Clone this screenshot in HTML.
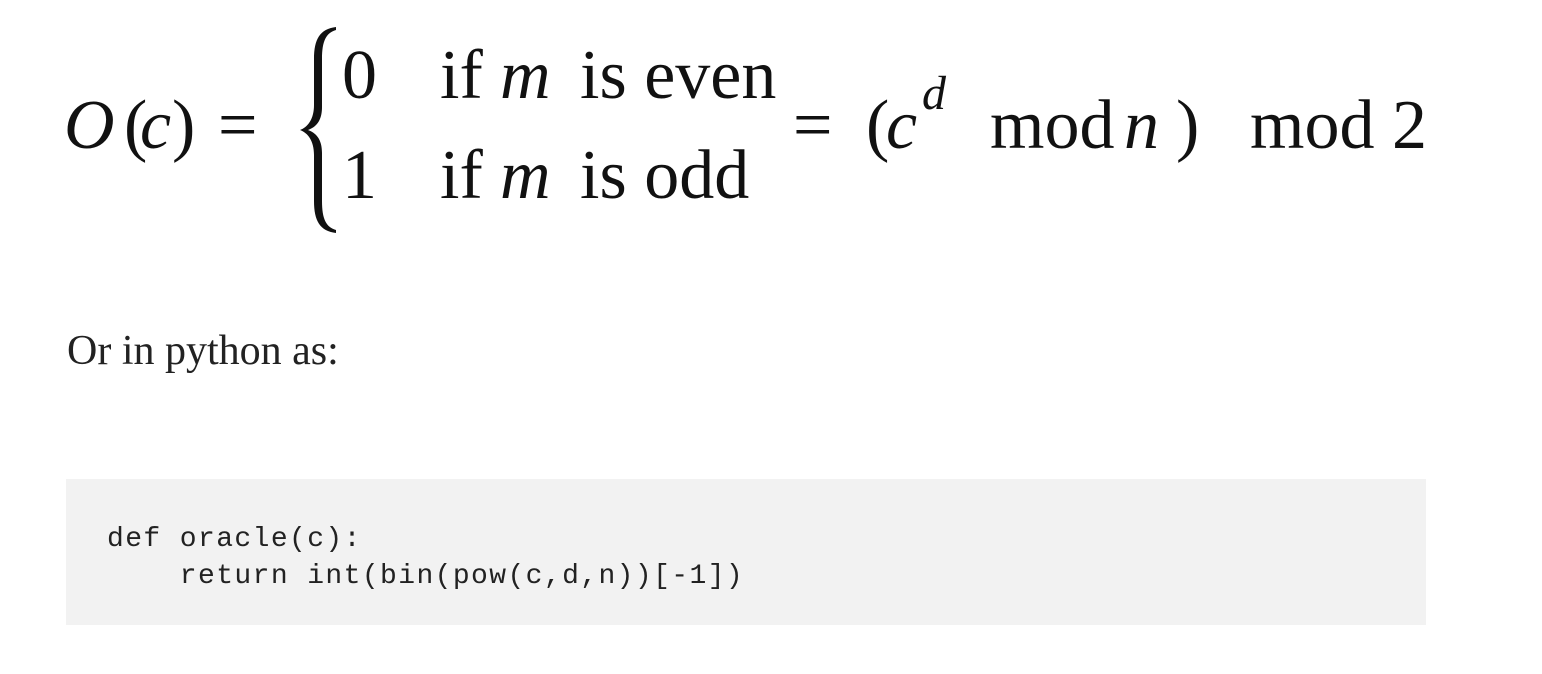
<!DOCTYPE html>
<html><head><meta charset="utf-8"><style>
html,body{margin:0;padding:0;background:#fff;}
body{width:1542px;height:674px;position:relative;overflow:hidden;color:#111;}
.m{position:absolute;font-family:"Liberation Serif",serif;font-size:70px;line-height:normal;white-space:pre;}
.i{font-style:italic;}
p{position:absolute;left:67px;top:327px;margin:0;font-family:"Liberation Serif",serif;font-size:42px;line-height:normal;color:#222;}
pre{position:absolute;left:66px;top:479px;width:1360px;height:146px;margin:0;background:#f2f2f2;box-sizing:border-box;padding:42px 0 0 41px;font-family:"Liberation Mono",monospace;font-size:28px;letter-spacing:1.4px;line-height:37px;color:#222;}
</style></head><body>
<span class="m i" style="left:64px;top:86px">O</span>
<span class="m" style="left:124px;top:86px">(</span>
<span class="m i" style="left:140px;top:86px">c</span>
<span class="m" style="left:172px;top:86px">)</span>
<span class="m" style="left:218px;top:86px">=</span>
<svg style="position:absolute;left:296px;top:25px" width="44" height="210" viewBox="0 0 44 210">
<path d="M40 2 C24 4 18 14 18 34 L18 80 C18 94 12 102 4 105 C12 108 18 116 18 130 L18 176 C18 196 24 206 40 208 L40 205 C30 202 26 194 26 176 L26 128 C26 114 20 108 12 105 C20 102 26 96 26 82 L26 34 C26 16 30 8 40 5 Z" fill="#111"/>
</svg>
<span class="m" style="left:342px;top:36px">0</span>
<span class="m" style="left:440px;top:36px">if</span>
<span class="m i" style="left:500px;top:36px">m</span>
<span class="m" style="left:580px;top:36px">is even</span>
<span class="m" style="left:342px;top:136px">1</span>
<span class="m" style="left:440px;top:136px">if</span>
<span class="m i" style="left:500px;top:136px">m</span>
<span class="m" style="left:580px;top:136px">is odd</span>
<span class="m" style="left:793px;top:86px">=</span>
<span class="m" style="left:866px;top:86px">(</span>
<span class="m i" style="left:886px;top:86px">c</span>
<span class="m i" style="left:922px;top:66px;font-size:48px">d</span>
<span class="m" style="left:990px;top:86px">mod</span>
<span class="m i" style="left:1124px;top:86px">n</span>
<span class="m" style="left:1176px;top:86px">)</span>
<span class="m" style="left:1250px;top:86px">mod 2</span>
<p>Or in python as:</p>
<pre>def oracle(c):
    return int(bin(pow(c,d,n))[-1])</pre>
</body></html>
